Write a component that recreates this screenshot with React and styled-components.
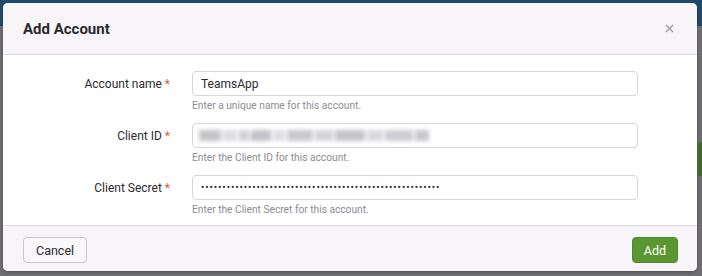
import { createGlobalStyle, styled } from "styled-components";

const GlobalStyle = createGlobalStyle`
  html, body {
    margin: 0;
    padding: 0;
  }
  body {
    font-family: Roboto, "Liberation Sans", sans-serif;
    color: #2b2a2e;
  }
`;

const Backdrop = styled.div`
  position: relative;
  width: 702px;
  height: 276px;
  box-sizing: border-box;
  padding: 3px 5px 5px 3px;
  background: linear-gradient(#1f4a6c 0 26px, #6e6e72 26px);
  overflow: hidden;
`;

const SideHint = styled.div`
  position: absolute;
  right: 0;
  top: 142px;
  width: 4px;
  height: 34px;
  background: #3f6b2a;
`;

const Modal = styled.div`
  display: flex;
  flex-direction: column;
  height: 268px;
  background: #fff;
  border-radius: 5px;
  overflow: hidden;
  box-shadow: 0 1px 3px rgba(0, 0, 0, 0.3);
`;

const Header = styled.div`
  display: flex;
  align-items: center;
  justify-content: space-between;
  height: 51px;
  padding: 0 23px 0 20px;
  background: #f7f5f8;
  border-bottom: 1px solid #dcdadf;
`;

const Title = styled.h2`
  margin: 0;
  font-size: 15px;
  font-weight: 700;
  color: #2b2a2e;
`;

const Close = styled.button`
  border: none;
  background: none;
  padding: 0;
  display: flex;
  color: #9a989e;
`;

const Body = styled.div`
  flex: 1;
  padding: 16px 59px 0 20px;
  display: flex;
  flex-direction: column;
  gap: 11px;
`;

const Row = styled.div`
  display: grid;
  grid-template-columns: 147px 1fr;
  column-gap: 22px;
`;

const Label = styled.label`
  height: 25px;
  display: flex;
  align-items: center;
  justify-content: flex-end;
  font-size: 12px;
  color: #2b2a2e;
`;

const Star = styled.span`
  color: #dc5a3c;
  margin-left: 3px;
`;

const Field = styled.div`
  display: flex;
  flex-direction: column;
`;

const Input = styled.div`
  height: 25px;
  box-sizing: border-box;
  border: 1px solid #d8d4dc;
  border-radius: 4px;
  background: #fff;
  display: flex;
  align-items: center;
  padding: 0 8px;
  font-size: 12px;
  color: #2b2a2e;
  overflow: hidden;
  white-space: nowrap;
`;

const Dots = styled.span`
  font-size: 10px;
  letter-spacing: 0.9px;
  color: #2f2e32;
`;

const Blurred = styled.span`
  display: flex;
  gap: 2px;
  filter: blur(2px);
  margin-left: -2px;
`;

const Blob = styled.span`
  height: 11px;
  width: ${(p) => p.$w}px;
  background: ${(p) => p.$c};
`;

const Help = styled.div`
  margin-top: 3px;
  font-size: 10.2px;
  color: #8d8b91;
  line-height: 13px;
`;

const Footer = styled.div`
  height: 46px;
  box-sizing: border-box;
  padding: 11px 19px 0 20px;
  display: flex;
  justify-content: space-between;
  align-items: flex-start;
  background: #f7f5f8;
  border-top: 1px solid #dcdadf;
`;

const Button = styled.button`
  height: 26px;
  padding: 0 ${(p) => (p.$primary ? "11px" : "12px")};
  border-radius: 4px;
  font-family: inherit;
  font-size: 12.5px;
  border: 1px solid ${(p) => (p.$primary ? "#4f8a2c" : "#c9c7cd")};
  background: ${(p) => (p.$primary ? "#5a9733" : "#f8f7f9")};
  color: ${(p) => (p.$primary ? "#fff" : "#2b2a2e")};
`;

const blobs = [
  [22, "#c4c3c7"], [14, "#dddce0"], [10, "#cfced2"], [20, "#c2c1c5"], [12, "#dedde1"],
  [26, "#cac9cd"], [18, "#d4d3d7"], [30, "#c5c4c8"], [16, "#d9d8dc"], [28, "#cdccd0"],
  [14, "#c8c7cb"],
];

export default function App() {
  return (
    <>
      <GlobalStyle />
      <Backdrop>
        <SideHint />
        <Modal>
          <Header>
            <Title>Add Account</Title>
            <Close aria-label="Close">
              <svg width="9" height="9" viewBox="0 0 9 9">
                <path d="M1 1 L8 8 M8 1 L1 8" stroke="currentColor" strokeWidth="1.3" />
              </svg>
            </Close>
          </Header>
          <Body>
            <Row>
              <Label>Account name<Star>*</Star></Label>
              <Field>
                <Input>TeamsApp</Input>
                <Help>Enter a unique name for this account.</Help>
              </Field>
            </Row>
            <Row>
              <Label>Client ID<Star>*</Star></Label>
              <Field>
                <Input>
                  <Blurred>
                    {blobs.map(([w, c], i) => (
                      <Blob key={i} $w={w} $c={c} />
                    ))}
                  </Blurred>
                </Input>
                <Help>Enter the Client ID for this account.</Help>
              </Field>
            </Row>
            <Row>
              <Label>Client Secret<Star>*</Star></Label>
              <Field>
                <Input>
                  <Dots>{"•".repeat(56)}</Dots>
                </Input>
                <Help>Enter the Client Secret for this account.</Help>
              </Field>
            </Row>
          </Body>
          <Footer>
            <Button>Cancel</Button>
            <Button $primary>Add</Button>
          </Footer>
        </Modal>
      </Backdrop>
    </>
  );
}
